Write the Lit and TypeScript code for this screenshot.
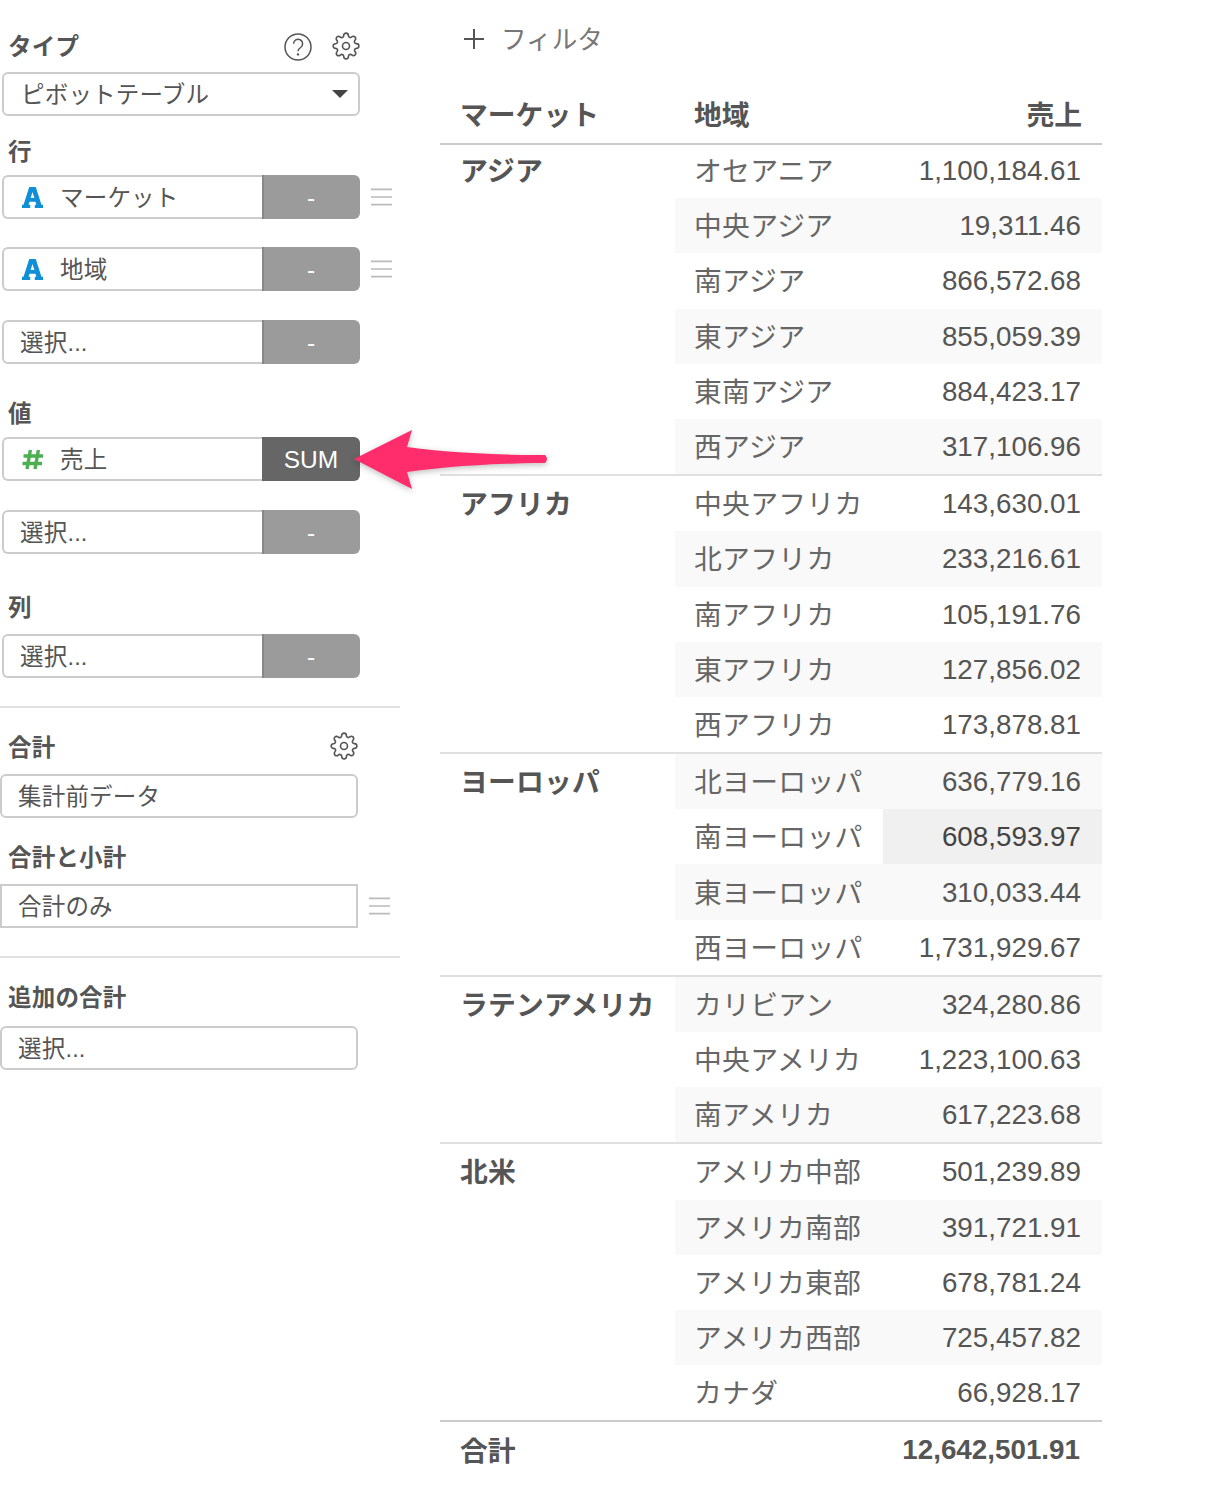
import { LitElement, html, css, svg } from "lit";
import { customElement } from "lit/decorators.js";

const groups: [string, [string, string][]][] = [
  ["アジア", [["オセアニア", "1,100,184.61"], ["中央アジア", "19,311.46"], ["南アジア", "866,572.68"], ["東アジア", "855,059.39"], ["東南アジア", "884,423.17"], ["西アジア", "317,106.96"]]],
  ["アフリカ", [["中央アフリカ", "143,630.01"], ["北アフリカ", "233,216.61"], ["南アフリカ", "105,191.76"], ["東アフリカ", "127,856.02"], ["西アフリカ", "173,878.81"]]],
  ["ヨーロッパ", [["北ヨーロッパ", "636,779.16"], ["南ヨーロッパ", "608,593.97"], ["東ヨーロッパ", "310,033.44"], ["西ヨーロッパ", "1,731,929.67"]]],
  ["ラテンアメリカ", [["カリビアン", "324,280.86"], ["中央アメリカ", "1,223,100.63"], ["南アメリカ", "617,223.68"]]],
  ["北米", [["アメリカ中部", "501,239.89"], ["アメリカ南部", "391,721.91"], ["アメリカ東部", "678,781.24"], ["アメリカ西部", "725,457.82"], ["カナダ", "66,928.17"]]],
];

const gear = html`<svg class="gear" viewBox="0 0 24 24"><circle cx="12" cy="12" r="3"></circle><path d="M19.4 15a1.65 1.65 0 0 0 .33 1.82l.06.06a2 2 0 0 1 0 2.83 2 2 0 0 1-2.83 0l-.06-.06a1.65 1.65 0 0 0-1.82-.33 1.65 1.65 0 0 0-1 1.51V21a2 2 0 0 1-2 2 2 2 0 0 1-2-2v-.09A1.65 1.65 0 0 0 9 19.4a1.65 1.65 0 0 0-1.82.33l-.06.06a2 2 0 0 1-2.83 0 2 2 0 0 1 0-2.83l.06-.06a1.65 1.65 0 0 0 .33-1.82 1.65 1.65 0 0 0-1.51-1H3a2 2 0 0 1-2-2 2 2 0 0 1 2-2h.09A1.65 1.65 0 0 0 4.6 9a1.65 1.65 0 0 0-.33-1.82l-.06-.06a2 2 0 0 1 0-2.83 2 2 0 0 1 2.83 0l.06.06a1.65 1.65 0 0 0 1.82.33H9a1.65 1.65 0 0 0 1-1.51V3a2 2 0 0 1 2-2 2 2 0 0 1 2 2v.09a1.65 1.65 0 0 0 1 1.51 1.65 1.65 0 0 0 1.82-.33l.06-.06a2 2 0 0 1 2.83 0 2 2 0 0 1 0 2.83l-.06.06a1.65 1.65 0 0 0-.33 1.82V9a1.65 1.65 0 0 0 1.51 1H21a2 2 0 0 1 2 2 2 2 0 0 1-2 2h-.09a1.65 1.65 0 0 0-1.51 1z"></path></svg>`;

const help = html`<svg class="help" viewBox="0 0 28 28"><circle cx="14" cy="14" r="13"></circle><path d="M9.6 10.8a4.5 4.5 0 1 1 7 3.7c-1.7 1.1-2.6 1.9-2.6 3.7"></path><circle class="dot" cx="14" cy="21.4" r="1.2"></circle></svg>`;

const letterA = html`<svg class="a" viewBox="0 0 22 22"><path d="M7.6 0h6.8l6 18.5H22V22h-8.6v-3.5h1.7l-1-3.1H7.9l-1 3.1h1.7V22H0v-3.5h1.6zM11 5.2 9 11.6h4z"></path></svg>`;

const hash = html`<svg class="hash" viewBox="0 0 22 21"><path d="M8.4 1 5 20M16.4 1 13 20M1.5 7h19.5M0.5 14.5h19.5"></path></svg>`;

const burger = html`<svg class="burger" viewBox="0 0 22 18"><path d="M0 1h22M0 9h22M0 17h22"></path></svg>`;

@customElement("app-root")
export class AppRoot extends LitElement {
  static styles = css`
    :host {
      display: block;
      width: 1228px;
      height: 1488px;
      position: relative;
      overflow: hidden;
      background: #fff;
      color: #555;
      font-family: "Liberation Sans", "Noto Sans CJK JP", sans-serif;
    }
    .page { display: flex; align-items: flex-start; }
    .side { width: 400px; flex: none; padding-top: 27px; font-size: 23.5px; }
    .label {
      display: flex; align-items: center; justify-content: space-between;
      height: 36px; padding-left: 8px; font-weight: 700; color: #555; font-size: 23.5px;
      letter-spacing: .2px;
    }
    .icons { display: flex; align-items: center; gap: 20px; margin-right: 40px; }
    .total-label .icons { margin-right: 42px; }
    .gear { width: 28px; height: 28px; fill: none; stroke: #555; stroke-width: 1.4; flex: none; }
    .top-icons .gear { margin-top: 2px; }
    .top-icons .help { margin-top: 3px; }
    .help { width: 28px; height: 28px; fill: none; stroke: #555; stroke-width: 1.5; flex: none; overflow: visible; }
    .help .dot { fill: #555; stroke: none; }
    .ctl-row { display: flex; align-items: center; padding-left: 2px; height: 44px; }
    .ctl {
      width: 358px; height: 44px; box-sizing: border-box; flex: none;
      display: flex; align-items: stretch;
      border-radius: 6px; background: #fff; position: relative; color: #555;
    }
    .box {
      flex: 1; min-width: 0; display: flex; align-items: center; box-sizing: border-box;
      border: 2px solid #ccc; border-radius: 6px; padding: 0 0 2px 17px; white-space: nowrap;
      letter-spacing: .2px;
    }
    .split .box { border-right: 0; border-radius: 6px 0 0 6px; padding-left: 16px; }
    .btn {
      width: 98px; flex: none; box-sizing: border-box; background: #9b9b9b; color: #fff;
      border-left: 2px solid #888; border-radius: 0 6px 6px 0; padding: 2px 2px 0 0;
      display: flex; align-items: center; justify-content: center; font-size: 24.5px;
    }
    .btn.on { background: #666; border-left-color: #666; }
    .a { width: 21px; height: 21px; fill: #0f8fd8; margin: 2px 17px 0 2px; flex: none; }
    .hash { width: 22px; height: 21px; stroke: #4caf50; stroke-width: 3.4; fill: none; margin: 2px 16px 0 2px; flex: none; }
    .burger { width: 21px; height: 18px; stroke: #bbb; stroke-width: 1.6; fill: none; margin: 0 0 1px 11px; flex: none; }
    .caret { width: 0; height: 0; border-left: 8px solid transparent; border-right: 8px solid transparent; border-top: 8px solid #444; position: absolute; right: 12px; top: 18px; }
    .side hr { border: 0; height: 2px; background: #e0e0e0; margin: 0; }
    .sum .ctl-row { padding-left: 0; }
    .sum .box { padding-left: 16px; }
    .square { border-radius: 0; }
    .square-box { border-radius: 0; }

    .main { margin-left: 40px; width: 662px; flex: none; }
    .filter { display: flex; align-items: center; height: 80px; padding: 0 0 5px 23px; color: #777; font-size: 25.6px; gap: 16px; box-sizing: border-box; }
    .plus { width: 22px; height: 22px; stroke: #555; stroke-width: 2; fill: none; margin-top: 2px; flex: none; }
    .table { font-size: 27.8px; }
    .g { display: grid; grid-template-columns: 235px 1fr; border-top: 2px solid #e0e0e0; }
    .g.first { border-top: 0; margin-top: -2px; }
    .hd { height: 65px; display: grid; grid-template-columns: 235px 1fr 1fr; align-items: center; border-bottom: 2px solid #ccc; font-weight: 700; box-sizing: border-box; padding-top: 2px; }
    .hd div:first-child, .m { padding-left: 20px; }
    .hd div:nth-child(2) { padding-left: 19px; }
    .hd div:last-child { text-align: right; padding-right: 20px; }
    .m { font-weight: 700; height: 55.2px; line-height: 58px; white-space: nowrap; letter-spacing: .2px; }
    .r { height: 55.2px; display: flex; justify-content: space-between; align-items: center; padding: 0 21px 0 19px; }
    .r > span:first-child { margin-bottom: 3px; letter-spacing: .3px; color: #666; }
    .r > span:last-child { margin-top: 1px; }
    .r.s { background: #f9f9f9; }
    .r.h { padding: 0 0 0 19px; }
    .r.h > b { font-weight: 400; background: #f0f0f0; align-self: stretch; width: 219px; box-sizing: border-box; padding: 1px 21px 0 0; display: flex; align-items: center; justify-content: flex-end; color: #444; }
    .foot { display: flex; justify-content: space-between; align-items: center; height: 56px; border-top: 2px solid #ccc; font-weight: 700; padding: 0 22px 0 20px; }
    .foot > span:first-child { margin-bottom: 3px; }
    .arrow { position: absolute; left: 340px; top: 420px; width: 220px; height: 80px; overflow: visible; filter: drop-shadow(0 2px 3px rgba(0,0,0,.25)); }
  `;

  private row(content: unknown, right: unknown, on = false, burgerOn = false) {
    return html`<div class="ctl-row"><div class="ctl split"><div class="box">${content}</div><div class="btn ${on ? "on" : ""}">${right}</div></div>${burgerOn ? burger : ""}</div>`;
  }

  private select(text: string, burgerOn = false, cls = "") {
    return html`<div class="ctl-row"><div class="ctl ${cls}"><div class="box ${cls ? "square-box" : ""}">${text}</div></div>${burgerOn ? burger : ""}</div>`;
  }

  render() {
    let n = 0;
    return html`
      <div class="page">
        <div class="side">
          <div class="label"><span>タイプ</span><span class="icons top-icons">${help}${gear}</span></div>
          <div style="height:9px"></div>
          <div class="ctl-row"><div class="ctl"><div class="box">ピボットテーブル</div><span class="caret"></span></div></div>

          <div style="height:16px"></div>
          <div class="label"><span>行</span></div>
          <div style="height:7px"></div>
          ${this.row(html`${letterA}<span>マーケット</span>`, "-", false, true)}
          <div style="height:28px"></div>
          ${this.row(html`${letterA}<span>地域</span>`, "-", false, true)}
          <div style="height:29px"></div>
          ${this.row("選択...", "-")}

          <div style="height:30px"></div>
          <div class="label"><span>値</span></div>
          <div style="height:7px"></div>
          ${this.row(html`${hash}<span>売上</span>`, "SUM", true)}
          <div style="height:29px"></div>
          ${this.row("選択...", "-")}

          <div style="height:34px"></div>
          <div class="label"><span>列</span></div>
          <div style="height:10px"></div>
          ${this.row("選択...", "-")}

          <div style="height:28px"></div>
          <hr />
          <div class="sum">
            <div style="height:20px"></div>
            <div class="label total-label"><span>合計</span><span class="icons">${gear}</span></div>
            <div style="height:10px"></div>
            ${this.select("集計前データ")}
            <div style="height:20px"></div>
            <div class="label"><span>合計と小計</span></div>
            <div style="height:10px"></div>
            ${this.select("合計のみ", true, "square")}
            <div style="height:28px"></div>
            <hr />
            <div style="height:20px"></div>
            <div class="label"><span>追加の合計</span></div>
            <div style="height:12px"></div>
            ${this.select("選択...")}
          </div>
        </div>

        <div class="main">
          <div class="filter"><svg class="plus" viewBox="0 0 22 22"><path d="M11 1v20M1 11h20"></path></svg><span>フィルタ</span></div>
          <div class="table">
            <div class="hd"><div>マーケット</div><div>地域</div><div>売上</div></div>
            ${groups.map(([m, rows], gi) => html`
              <div class="g ${gi === 0 ? "first" : ""}">
                <div class="m">${m}</div>
                <div>
                  ${rows.map(([a, b]) => {
                    n++;
                    if (a === "南ヨーロッパ") return html`<div class="r h"><span>${a}</span><b>${b}</b></div>`;
                    return html`<div class="r ${n % 2 === 0 ? "s" : ""}"><span>${a}</span><span>${b}</span></div>`;
                  })}
                </div>
              </div>`)}
            <div class="foot"><span>合計</span><span>12,642,501.91</span></div>
          </div>
        </div>
      </div>
      <svg class="arrow" viewBox="0 0 220 80">
        ${svg`<path d="M14 39 L72 10 L67 27 C 110 33, 165 35, 205 35 Q 209 39 205 43 C 165 43, 110 46, 67 52 L72 69 Z" fill="#ff2d6b"></path>`}
      </svg>
    `;
  }
}
